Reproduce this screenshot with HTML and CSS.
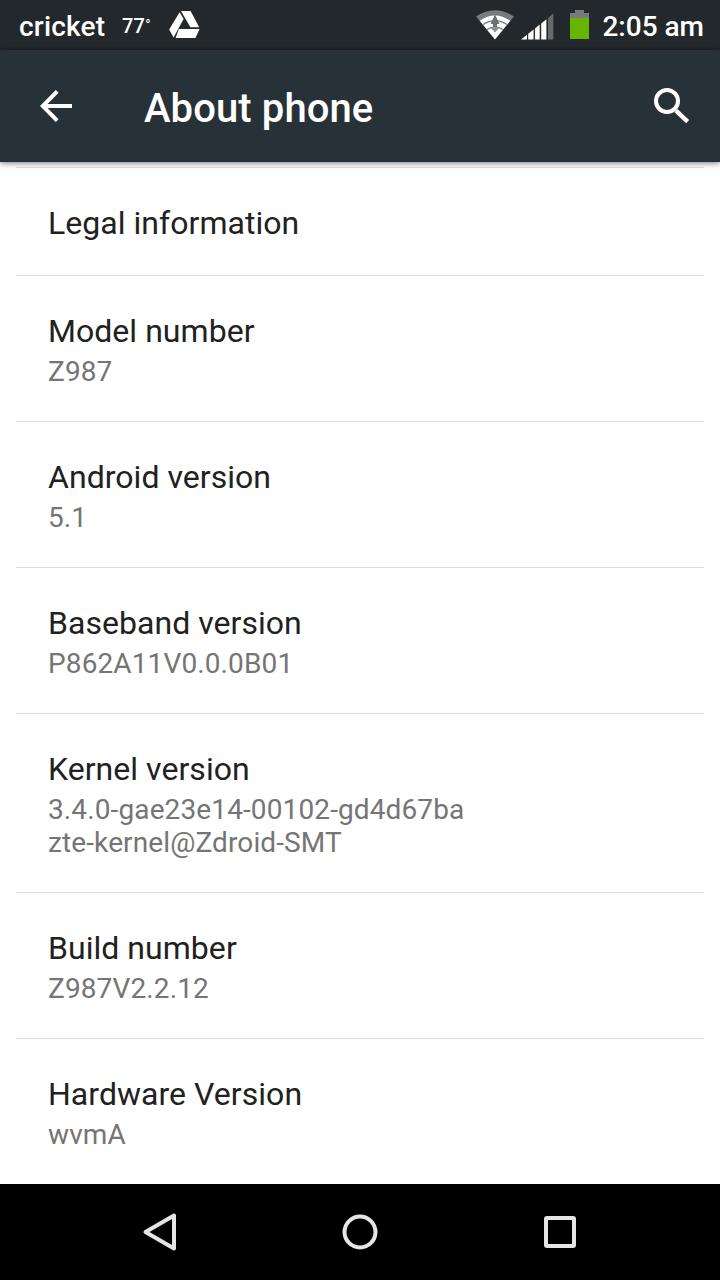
FILE: index.html
```html
<!DOCTYPE html>
<html lang="en">
<head>
    <meta charset="UTF-8">
    <meta name="viewport" content="width=device-width, initial-scale=1.0">
    <title>About phone</title>
    <link rel="stylesheet" href="styles.css">
</head>
<body>
    <div class="screen">
        <div class="status-bar">
            <span class="carrier">cricket</span>
            <span class="temp">77<span class="degree">°</span></span>
            <svg class="drive" width="31" height="28" viewBox="0 0 31 28" fill="#fff">
                <path d="M10.6 1.2 14.6 8 4.6 26.6 0.2 18.6z"/>
                <path d="M12 0h9.6l8.6 16.2h-8.8z"/>
                <path d="M9.8 18H30.6L26.4 27H6.6z"/>
            </svg>
            <div class="indicators">
                <svg class="wifi" width="38" height="30" viewBox="0 0 38 30">
                    <path fill="#777b7d" d="M0 6.5Q19-6 38 6.5L34.2 11 3.8 11z"/>
                    <path fill="#fff" d="M3.6 10.8Q19 0 34.4 10.8L19 29.5z"/>
                    <path fill="none" stroke="#777b7d" stroke-width="1.2" d="M7 14.6Q19 6.5 31 14.6M11 19.6Q19 14 27 19.6"/>
                    <path fill="#6b7072" d="M19 4.5 23.5 14H21V17H17V14H14.5z"/>
                    <path fill="#8b8f90" d="M14.5 17.6h9L19 22.4z"/>
                </svg>
                <svg class="signal" width="33" height="27" viewBox="0 0 33 27" fill="#fff">
                    <path d="M0 26.5 6 21.8V26.5z"/>
                    <path d="M7.2 20.8 12.6 16.5V26.5H7.2z"/>
                    <path d="M14 15.4 18.7 11.6V26.5H14z"/>
                    <path d="M20.2 10.4 25.4 6.2V26.5H20.2z"/>
                    <path fill="#64696b" d="M27 5 32.3.3V26.5H27z"/>
                </svg>
                <svg class="battery" width="19" height="29" viewBox="0 0 19 29">
                    <path fill="#777b7d" d="M5 0h9v3h5v5H0V3h5z"/>
                    <path fill="#66b500" d="M0 8h19v21H0z"/>
                </svg>
                <span class="clock">2:05 am</span>
            </div>
        </div>

        <div class="header">
            <svg width="32" height="32" viewBox="0 0 32 32" fill="none" stroke="#fff" stroke-width="4">
                <path d="M32 16H3M17.2 1.4 2.7 16 17.2 30.6"/>
            </svg>
            <h1>About phone</h1>
            <svg class="search" width="36" height="36" viewBox="0 0 36 36" fill="none" stroke="#fff" stroke-width="4">
                <circle cx="13" cy="13" r="11"/>
                <path stroke-width="4.4" d="M22 22.6 33.6 33.6"/>
            </svg>
        </div>

        <div class="list">
            <div class="item">
                <h2>Legal information</h2>
            </div>
            <div class="item">
                <h2>Model number</h2>
                <p>Z987</p>
            </div>
            <div class="item">
                <h2>Android version</h2>
                <p>5.1</p>
            </div>
            <div class="item">
                <h2>Baseband version</h2>
                <p>P862A11V0.0.0B01</p>
            </div>
            <div class="item">
                <h2>Kernel version</h2>
                <p>3.4.0-gae23e14-00102-gd4d67ba<br>zte-kernel@Zdroid-SMT</p>
            </div>
            <div class="item">
                <h2>Build number</h2>
                <p>Z987V2.2.12</p>
            </div>
            <div class="item">
                <h2>Hardware Version</h2>
                <p>wvmA</p>
            </div>
        </div>

        <div class="nav-bar">
            <svg width="40" height="40" viewBox="0 0 40 40">
                <path d="M34 3.5V36.5L5.5 20z"/>
            </svg>
            <svg width="40" height="40" viewBox="0 0 40 40">
                <circle cx="20" cy="20" r="15.5"/>
            </svg>
            <svg width="40" height="40" viewBox="0 0 40 40">
                <rect x="6" y="6" width="28" height="28" rx="1"/>
            </svg>
        </div>
    </div>
</body>
</html>
```

FILE: styles.css
```css
:root {
    --status: #22282b;
    --header: #273238;
    --text: #212121;
    --text-light: #757575;
    --divider: #dddddd;
}

* {
    margin: 0;
    padding: 0;
    box-sizing: border-box;
}

body {
    font-family: Roboto, sans-serif;
    background-color: white;
}

svg {
    display: block;
    flex-shrink: 0;
}

.screen {
    width: 720px;
    height: 1280px;
    display: flex;
    flex-direction: column;
    overflow: hidden;
}

.status-bar {
    height: 50px;
    padding: 0 16px 0 19px;
    display: flex;
    align-items: center;
    background-color: var(--status);
    color: white;
    font-size: 28px;
    font-weight: 500;
    line-height: 34px;
    white-space: nowrap;
}

.carrier {
    width: 103px;
    padding-top: 4px;
    letter-spacing: 0.2px;
}

.temp {
    width: 47px;
    font-size: 20px;
    letter-spacing: 0.2px;
}

.degree {
    font-size: 14px;
    vertical-align: 3px;
}

.indicators {
    margin-left: auto;
    display: flex;
    align-items: center;
}

.signal {
    margin: 2px 16px 0 7px;
}

.battery {
    margin-top: -1px;
}

.clock {
    padding-top: 4px;
    margin-left: 13px;
}

.header {
    position: relative;
    height: 112px;
    padding: 0 30px 0 40px;
    display: flex;
    align-items: center;
    background-color: var(--header);
    color: white;
    box-shadow: 0 1px 6px rgba(0, 0, 0, 0.55);
}

.header h1 {
    margin-left: 72px;
    padding-top: 6px;
    font-size: 40px;
    font-weight: 500;
    line-height: 48px;
    letter-spacing: 0.1px;
}

.search {
    margin-left: auto;
}

.list {
    flex: 1;
    padding: 5px 16px 0;
}

.item {
    border-top: 1px solid var(--divider);
    padding: 36px 32px 33px;
}

.item h2 {
    color: var(--text);
    font-size: 32px;
    font-weight: 400;
    line-height: 38px;
    letter-spacing: 0.04px;
}

.item p {
    margin-top: 5px;
    color: var(--text-light);
    font-size: 28px;
    line-height: 33px;
    letter-spacing: 0.12px;
}

.nav-bar {
    height: 96px;
    display: flex;
    align-items: center;
    justify-content: center;
    gap: 160px;
    background-color: black;
}

.nav-bar svg {
    fill: none;
    stroke: #e6e6e6;
    stroke-width: 4;
    stroke-linejoin: round;
}
```
